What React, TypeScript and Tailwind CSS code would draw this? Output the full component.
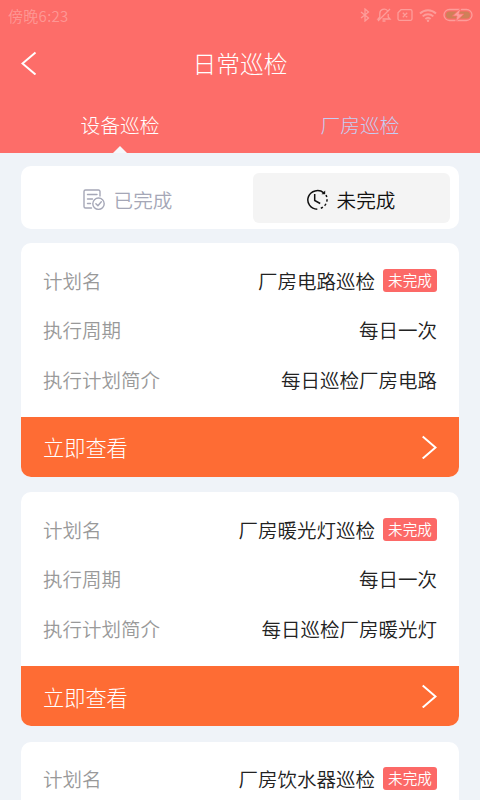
const plans = [
  { name: "厂房电路巡检", cycle: "每日一次", intro: "每日巡检厂房电路" },
  { name: "厂房暖光灯巡检", cycle: "每日一次", intro: "每日巡检厂房暖光灯" },
  { name: "厂房饮水器巡检", cycle: "每日一次", intro: "每日巡检厂房饮水器" },
];

function StatusBar() {
  return (
    <div className="flex h-[30px] items-center justify-between pl-2 pr-[7px]">
      <span className="pt-px text-[15px] leading-[30px] tracking-[0.3px] text-white/30">傍晚6:23</span>
      <div className="flex items-center text-[#fd9d9a]">
        {/* Bluetooth */}
        <svg className="mr-[6px] h-[14px] w-[10px]" viewBox="0 0 10 14" fill="none" stroke="currentColor" strokeWidth="1.3">
          <path d="M1 4l7.500 6L5 13V1l3.500 3L1 10" />
        </svg>
        {/* Muted bell */}
        <svg className="mr-[5px] h-[14px] w-4" viewBox="0 0 16 14" fill="none" stroke="currentColor" strokeWidth="1.3">
          <path d="M11.500 2.600A4.400 4.400 0 0 0 3.800 5.500V9L2 11h2M6.500 11H14l-1.800-2V6M6.500 13h3M14 1L2 13" />
        </svg>
        {/* No SIM */}
        <svg className="mr-[6px] h-3 w-4" viewBox="0 0 16 12" fill="none" stroke="currentColor" strokeWidth="1.3">
          <path d="M4 .7h9.500a1.500 1.500 0 0 1 1.500 1.500v7.600a1.500 1.500 0 0 1-1.500 1.500h-11A1.500 1.500 0 0 1 1 9.800V3.700zM5.800 3.800l4.400 4.400M10.200 3.800L5.800 8.200" />
        </svg>
        {/* Wifi */}
        <svg className="mr-[6px] h-[13px] w-[18px]" viewBox="0 0 18 13" fill="none" stroke="currentColor" strokeWidth="1.9">
          <path d="M1 4.500a11.500 11.500 0 0 1 16 0M3.700 7.400a7.600 7.600 0 0 1 10.600 0M6.400 10a3.800 3.800 0 0 1 5.200 0" />
          <circle cx="9" cy="11.800" r="1.200" fill="currentColor" stroke="none" />
        </svg>
        {/* Charging battery */}
        <svg className="h-[14px] w-[30px]" viewBox="0 0 30 14" fill="none">
          <rect x="1" y="1.500" width="28" height="11" rx="5.500" stroke="currentColor" strokeWidth="1.300" />
          <rect x="3" y="3.500" width="24" height="7" rx="3.500" fill="#cf8058" />
          <path d="M18 0l-8.500 8h4.500l-1.500 6 8.500-8h-5z" fill="#fd9d9a" stroke="#fd6d69" strokeWidth=".8" />
        </svg>
      </div>
    </div>
  );
}

function DoneIcon() {
  return (
    <svg className="h-[22px] w-[22px]" viewBox="0 0 22 22" fill="none" stroke="currentColor" strokeWidth="1.4" strokeLinecap="round" strokeLinejoin="round">
      <path d="M17 7V2.500A1.500 1.500 0 0 0 15.500 1h-13A1.500 1.500 0 0 0 1 2.500v15A1.500 1.500 0 0 0 2.500 19h6" />
      <path d="M4.500 5.500h9.500M4.500 10h5M4.500 14.500h3" />
      <circle cx="15.500" cy="14.700" r="5.700" />
      <path d="M12.900 14.700l2 2 3.400-4" />
    </svg>
  );
}

function PendingIcon() {
  return (
    <svg className="h-[22px] w-[22px]" viewBox="0 0 22 22" fill="none" stroke="currentColor" strokeWidth="1.5">
      <path d="M17.800 3.800A9.700 9.300 0 1 0 11.300 20.200" />
      <path d="M14.800 19.300A9.500 9.500 0 0 0 20 6" strokeDasharray="2.400 2.200" />
      <path d="M19.200 1.600v3.700h-3.700z" fill="currentColor" stroke="none" />
      <path d="M8.700 5v6.500l5.500 3" />
    </svg>
  );
}

function PlanCard({ name, cycle, intro }: { name: string; cycle: string; intro: string }) {
  return (
    <div className="shrink-0 overflow-hidden rounded-[10px] bg-white">
      <div className="flex h-[174px] flex-col px-[22px] pt-3 text-[19.5px] text-[#222]">
        <div className="flex h-[49.6px] items-center justify-between">
          <span className="text-[#999]">计划名</span>
          <div className="flex items-center">
            <span>{name}</span>
            <span className="ml-2 flex h-[23px] w-[54px] items-center justify-center rounded-[3px] bg-[#fc6967] text-[14.6px] text-white">
              未完成
            </span>
          </div>
        </div>
        <div className="flex h-[49.6px] items-center justify-between">
          <span className="text-[#999]">执行周期</span>
          <span>{cycle}</span>
        </div>
        <div className="flex h-[49.6px] items-center justify-between">
          <span className="text-[#999]">执行计划简介</span>
          <span>{intro}</span>
        </div>
      </div>
      <button className="flex h-[60px] w-full items-center justify-between bg-[#fe6c34] px-[22px] text-[21.2px] text-white">
        <span className="font-light">立即查看</span>
        <svg className="h-6 w-[15px]" viewBox="0 0 15 24" fill="none" stroke="currentColor" strokeWidth="2">
          <path d="M.7 1.500l12.800 11L.7 23.500" />
        </svg>
      </button>
    </div>
  );
}

export default function App() {
  return (
    <div className="h-[800px] w-[480px] overflow-hidden bg-[#eff3f8] font-['Noto_Sans_CJK_SC',sans-serif] font-[350]">
      <header className="flex h-[153px] flex-col bg-[#fd6d69] text-white">
        <StatusBar />
        <div className="grid h-[66px] grid-cols-[1fr_auto_1fr] items-center px-[21px]">
          <svg className="h-6 w-4" viewBox="0 0 16 24" fill="none" stroke="currentColor" strokeWidth="2">
            <path d="M14.500 1.500L1.500 12.500l13 11" />
          </svg>
          <h1 className="text-[23.8px] font-light">日常巡检</h1>
        </div>
        <nav className="grid flex-1 grid-cols-2 text-[19.8px] font-light">
          <div className="flex flex-col items-center justify-between pt-[14px]">
            <span className="leading-[30px]">设备巡检</span>
            <svg className="h-[7px] w-[14px]" viewBox="0 0 14 7" fill="#f6f8fb">
              <path d="M0 7l7-7 7 7z" />
            </svg>
          </div>
          <div className="flex flex-col items-center pt-[14px] text-[#c5cdf3]">
            <span className="leading-[30px]">厂房巡检</span>
          </div>
        </nav>
      </header>

      <main className="flex flex-col px-[21px] pt-[13px]">
        {/* Status filter */}
        <div className="flex h-[63px] rounded-[10px] bg-white py-[7px] pr-[9px] text-[19.6px]">
          <div className="flex h-[50px] flex-1 items-center justify-center gap-[9px] pr-[19px] pt-[3px] text-[#a5a7b7]">
            <DoneIcon />
            <span>已完成</span>
          </div>
          <div className="flex h-[50px] w-[197px] items-center justify-center gap-[9px] rounded-md bg-[#f4f4f4] pr-[2px] pt-[3px] text-[#111]">
            <PendingIcon />
            <span>未完成</span>
          </div>
        </div>

        <div className="mt-[14.4px] flex flex-col gap-[15.1px]">
          {plans.map((plan) => (
            <PlanCard key={plan.name} {...plan} />
          ))}
        </div>
      </main>
    </div>
  );
}
